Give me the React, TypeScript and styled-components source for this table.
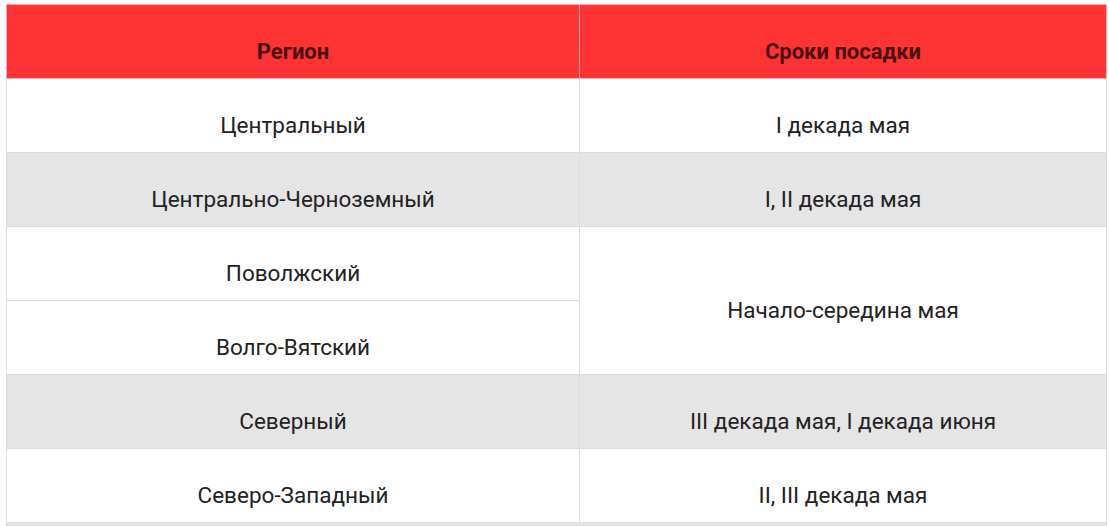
import React from "react";
import styled, { createGlobalStyle } from "styled-components";

const Global = createGlobalStyle`
  html, body { margin: 0; padding: 0; background: #ffffff; }
  body { font-family: Roboto, "Noto Sans", Arial, sans-serif; }
`;

const Page = styled.div`
  padding: 4px 3px 0 6px;
`;

const Table = styled.table`
  width: 1100px;
  border-collapse: collapse;
  table-layout: fixed;
  font-family: Roboto, "Noto Sans", Arial, sans-serif;
  font-size: 22.5px;
  color: #222222;
`;

const HeadCell = styled.th`
  background: #ff3333;
  color: #4a1212;
  font-weight: 700;
  font-size: 22px;
  line-height: 24px;
  height: 73px;
  box-sizing: border-box;
  padding: 35px 10px 14px;
  text-align: center;
  vertical-align: middle;
  border: 1px solid #f2b0b0;
`;

const Row = styled.tr<{ $shaded?: boolean }>`
  background: ${(p) => (p.$shaded ? "#e5e5e5" : "#ffffff")};
`;

const Cell = styled.td`
  height: 73px;
  box-sizing: border-box;
  padding: 34px 10px 15px;
  line-height: 24px;
  text-align: center;
  vertical-align: middle;
  border: 1px solid #dcdcdc;
`;

const rows: { region: string; term?: string; span?: number; shaded?: boolean }[] = [
  { region: "Центральный", term: "I декада мая" },
  { region: "Центрально-Черноземный", term: "I, II декада мая", shaded: true },
  { region: "Поволжский", term: "Начало-середина мая", span: 2 },
  { region: "Волго-Вятский" },
  { region: "Северный", term: "III декада мая, I декада июня", shaded: true },
  { region: "Северо-Западный", term: "II, III декада мая" },
  { region: "", term: "", shaded: true },
];

export default function App() {
  return (
    <>
      <Global />
      <Page>
        <Table>
          <colgroup>
            <col style={{ width: 573 }} />
            <col style={{ width: 527 }} />
          </colgroup>
          <thead>
            <tr>
              <HeadCell>Регион</HeadCell>
              <HeadCell>Сроки посадки</HeadCell>
            </tr>
          </thead>
          <tbody>
            {rows.map((r, i) => (
              <Row key={i} $shaded={r.shaded}>
                <Cell>{r.region}</Cell>
                {r.term !== undefined && <Cell rowSpan={r.span}>{r.term}</Cell>}
              </Row>
            ))}
          </tbody>
        </Table>
      </Page>
    </>
  );
}
